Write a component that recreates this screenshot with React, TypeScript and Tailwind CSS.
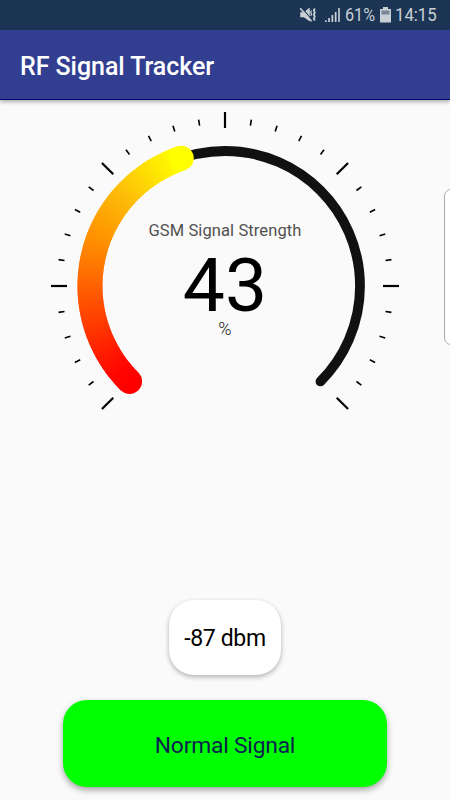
const TICKS = Array.from({ length: 31 }, (_, i) => i);
const START = 135;
const SWEEP = 116.1;
const STEPS = 116;
const SLICES = Array.from({ length: STEPS }, (_, i) => i);

const STOPS: [number, number[]][] = [
  [0, [255, 0, 0]],
  [0.06, [255, 8, 0]],
  [0.39, [255, 98, 0]],
  [0.56, [255, 145, 0]],
  [0.73, [253, 184, 8]],
  [0.97, [255, 252, 0]],
  [1, [255, 255, 0]],
];

function colorAt(t: number) {
  const i = Math.max(1, STOPS.findIndex(([at]) => at >= t));
  const [t0, c0] = STOPS[i - 1];
  const [t1, c1] = STOPS[i];
  const k = (t - t0) / (t1 - t0);
  return `rgb(${c0.map((v, j) => Math.round(v + (c1[j] - v) * k)).join(",")})`;
}

function point(radius: number, degrees: number) {
  const a = (degrees * Math.PI) / 180;
  return { x: 225 + radius * Math.cos(a), y: 186 + radius * Math.sin(a) };
}

function arc(from: number, to: number) {
  const a = point(135, from);
  const b = point(135, to);
  return `M${a.x} ${a.y}A135 135 0 ${to - from > 180 ? 1 : 0} 1 ${b.x} ${b.y}`;
}

function StatusBar() {
  return (
    <div className="flex h-[30px] items-center bg-[#1c3555] text-[#c8d0d4]">
      <svg className="ml-[299px] h-[18px] w-[19px] shrink-0" viewBox="0 0 19 18" fill="currentColor">
        <path d="M1.2 6.2h3.6l6-4.7v14l-6-4.3H1.2z" />
        <path d="M2.6 1.6l10.5 12.6" stroke="#1c3555" strokeWidth="1.2" />
        <path d="M1.2 2.2l11.4 13" stroke="currentColor" strokeWidth="1.7" />
        <path d="M12.6 4.5l-1 1.8 1 1.8-1 1.8" fill="none" stroke="currentColor" strokeWidth="1.2" />
        <path d="M15.8 2.5l-1 2 1 2-1 2 1 2-1 2 1 2" fill="none" stroke="currentColor" strokeWidth="1.8" />
      </svg>
      <svg className="ml-[7px] h-[16px] w-[15px] shrink-0" viewBox="0 0 15 16" fill="currentColor">
        <path d="M0 13.3h1.6V15H0zM3.2 11h1.7v4H3.2zM6.5 8h1.7v7H6.5zM9.8 5h1.7v10H9.8zM13.2 1h1.6v14h-1.6z" />
      </svg>
      <span className="ml-[5px] w-[31px] origin-left scale-x-[.9] whitespace-nowrap text-[18px] leading-[30px]">61%</span>
      <svg className="ml-[4px] h-[16px] w-[11px] shrink-0" viewBox="0 0 11 16" fill="currentColor">
        <path d="M3 0h5v2h3v13.5H0V2h3z" />
        <path d="M1.5 3.5h8v4h-8z" fill="#778795" />
      </svg>
      <span className="ml-[4px] origin-left scale-x-[.93] whitespace-nowrap text-[18px] leading-[30px]">14:15</span>
    </div>
  );
}

function Gauge() {
  const first = point(135, START);
  const last = point(135, START + SWEEP);
  return (
    <div className="grid h-[320px] w-[450px]">
      <svg className="col-start-1 row-start-1" width="450" height="320" viewBox="0 0 450 320" fill="none">
        {TICKS.map((i) => {
          const major = i % 5 === 0;
          const a = point(major ? 158 : 162.5, START + i * 9);
          const b = point(major ? 174 : 168.5, START + i * 9);
          return <line key={i} x1={a.x} y1={a.y} x2={b.x} y2={b.y} stroke="#000" strokeWidth={major ? 2.2 : 1.6} />;
        })}
        <path d={arc(START, 405)} stroke="#111" strokeWidth="9.8" strokeLinecap="round" />
        <circle cx={first.x} cy={first.y} r="12.5" fill="#ff0000" />
        {SLICES.map((i) => {
          const from = START + (i * SWEEP) / STEPS;
          const to = Math.min(from + 1.6, START + SWEEP);
          return <path key={i} d={arc(from, to)} stroke={colorAt((i + 0.5) / STEPS)} strokeWidth="25" />;
        })}
        <circle cx={last.x} cy={last.y} r="12.5" fill="#ffff00" />
      </svg>
      <div className="col-start-1 row-start-1 flex flex-col items-center pt-[121px]">
        <span className="text-[16.5px] leading-[20px] tracking-[.1px] text-[#505050]">GSM Signal Strength</span>
        <span className="mt-[10px] text-[75px] leading-[68px] text-black">43</span>
        <span className="text-[18px] font-light leading-[20px] text-[#222]">%</span>
      </div>
    </div>
  );
}

export default function App() {
  return (
    <div className="flex h-[800px] w-[450px] flex-col overflow-hidden bg-[#fafafa] font-['Roboto',sans-serif]">
      <StatusBar />
      <header className="z-10 flex h-[70px] shrink-0 items-center border-b border-[#00006e] bg-[#323e90] pl-5 pt-[4px] text-[25px] font-medium tracking-[-.06px] text-white shadow-[0_2px_4px_rgba(0,0,0,.3)]">
        RF Signal Tracker
      </header>
      <main className="relative flex flex-1 flex-col items-center">
        <Gauge />
        <div className="absolute left-[444px] top-[89px] h-[156px] w-[20px] rounded-[7px] border border-[#aaa] bg-white" />
        <div className="mt-[180px] flex h-[75px] w-[112px] items-center justify-center rounded-[25px] bg-white pt-[3px] text-[23px] tracking-[-.35px] text-black shadow-[0_2px_5px_rgba(0,0,0,.3)]">
          -87 dbm
        </div>
        <div className="mt-[25px] flex h-[87px] w-[324px] items-center justify-center rounded-[24px] bg-[#00ff00] pt-[5px] text-[22.8px] tracking-[-.2px] text-[#0a2350] shadow-[0_3px_6px_rgba(0,0,0,.35)]">
          Normal Signal
        </div>
      </main>
    </div>
  );
}
